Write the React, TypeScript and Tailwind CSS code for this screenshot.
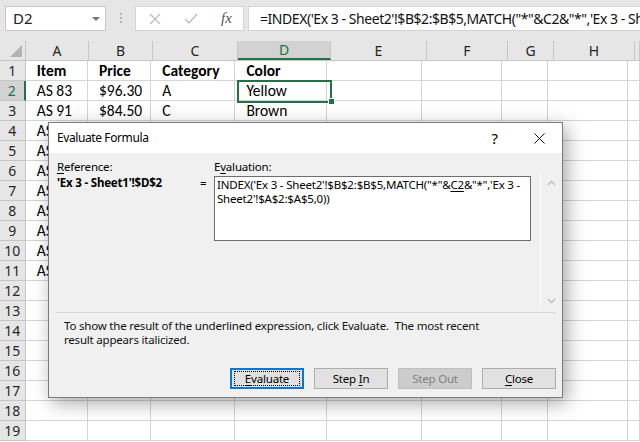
import React from "react";

const colWidths = ["w-[63px]", "w-[64px]", "w-[85px]", "w-[93px]", "w-[96px]", "w-[81px]", "w-[46px]", "w-[81px]", "flex-1"];
const colNames = ["A", "B", "C", "D", "E", "F", "G", "H", ""];

const cells: string[][] = [
  ["Item", "Price", "Category", "Color"],
  ["AS 83", "$96.30", "A", "Yellow"],
  ["AS 91", "$84.50", "C", "Brown"],
  ["AS 12", "$11.20", "B", "Green"],
  ["AS 35", "$47.80", "A", "Red"],
  ["AS 47", "$62.10", "D", "Blue"],
  ["AS 58", "$23.40", "B", "White"],
  ["AS 66", "$71.90", "C", "Black"],
  ["AS 72", "$39.60", "A", "Grey"],
  ["AS 78", "$55.00", "D", "Pink"],
  ["AS 99", "$18.70", "B", "Orange"],
];

const cellFont = { fontFamily: "Carlito, Lato, 'Liberation Sans', sans-serif" };
const uiFont = { fontFamily: "'Segoe UI', 'Noto Sans', 'Open Sans', sans-serif" };

function FormulaBar() {
  return (
    <div className="flex h-[41px] items-start bg-[#e6e6e6] pt-[6px]" style={uiFont}>
      <div className="ml-[5px] flex h-[25px] w-[101px] items-center justify-between border border-[#c6c6c6] bg-white pl-[7px] pr-[5px] text-[15px] text-[#222]">
        <span>D2</span>
        <span className="mt-[1px] h-0 w-0 border-x-[4px] border-t-[4px] border-x-transparent border-t-[#777]" />
      </div>
      <div className="ml-[14px] mt-[7px] flex flex-col gap-[2px]">
        <span className="h-[2px] w-[2px] bg-[#b4b4b4]" />
        <span className="h-[2px] w-[2px] bg-[#b4b4b4]" />
        <span className="h-[2px] w-[2px] bg-[#b4b4b4]" />
      </div>
      <div className="ml-[13px] flex h-[25px] w-[109px] items-center border border-[#d4d4d4] bg-white">
        <svg width="12" height="12" viewBox="0 0 12 12" className="ml-[13px]">
          <path d="M1 1 L11 11 M11 1 L1 11" stroke="#bdbdbd" strokeWidth="1.3" fill="none" />
        </svg>
        <svg width="14" height="12" viewBox="0 0 14 12" className="ml-[23px]">
          <path d="M1 6 L5 10 L13 1" stroke="#bdbdbd" strokeWidth="1.5" fill="none" />
        </svg>
        <span className="ml-[23px] text-[15px] italic text-[#555]" style={{ fontFamily: "'Liberation Serif', serif" }}>
          fx
        </span>
      </div>
      <div className="ml-[4px] flex h-[25px] flex-1 items-center overflow-hidden whitespace-nowrap border border-r-0 border-[#d4d4d4] bg-white pl-[11px] text-[14px] tracking-[-0.45px] text-[#111]">
        =INDEX('Ex 3 - Sheet2'!$B$2:$B$5,MATCH("*"&amp;C2&amp;"*",'Ex 3 - Sheet2'!$A$2:$A$5,0))
      </div>
    </div>
  );
}

function HeaderRow() {
  return (
    <div className="flex h-[20px] border-b border-[#c6c6c6] bg-[#e6e6e6] text-[14px] text-[#262626]" style={uiFont}>
      <div className="relative w-[26px] border-r border-[#c6c6c6]">
        <span className="absolute bottom-[3px] right-[3px] h-0 w-0 border-b-[12px] border-l-[12px] border-b-[#b4b4b4] border-l-transparent" />
      </div>
      {colNames.map((name, i) => (
        <div
          key={i}
          className={`${colWidths[i]} flex items-center justify-center border-r border-[#c6c6c6] ${
            name === "D" ? "border-b-2 border-b-[#217346] bg-[#d2d2d2] text-[#217346]" : ""
          }`}
        >
          {name}
        </div>
      ))}
    </div>
  );
}

function GridRow({ index, values }: { index: number; values: string[] }) {
  const active = index === 2;
  return (
    <div className="flex h-[20px]">
      <div
        className={`flex w-[26px] items-center justify-center border-b border-r border-[#c6c6c6] text-[14px] ${
          active ? "border-r-2 border-r-[#217346] bg-[#d2d2d2] text-[#217346]" : "bg-[#e6e6e6] text-[#262626]"
        }`}
        style={uiFont}
      >
        {index}
      </div>
      {colWidths.map((w, i) => (
        <div
          key={i}
          className={`${w} flex items-center overflow-hidden whitespace-nowrap border-b border-r border-[#d4d4d4] pl-[11px] text-[15.5px] text-black ${
            index === 1 ? "font-bold" : ""
          }`}
          style={cellFont}
        >
          {values[i] ?? ""}
        </div>
      ))}
    </div>
  );
}

function DialogButton({
  label,
  mnemonic,
  rest,
  primary,
  disabled,
}: {
  label: string;
  mnemonic: string;
  rest: string;
  primary?: boolean;
  disabled?: boolean;
}) {
  return (
    <div
      className={`flex h-[21px] w-[74px] items-center justify-center ${
        primary
          ? "border-2 border-[#0078d7] bg-[#e1e1e1] text-black"
          : disabled
          ? "border border-[#bfbfbf] bg-[#cccccc] text-[#838383]"
          : "border border-[#adadad] bg-[#e1e1e1] text-black"
      }`}
    >
      <div className={primary ? "flex h-[15px] w-[66px] items-center justify-center border border-dotted border-black" : ""}>
        {label}
        <span className={disabled ? "" : "underline underline-offset-2"}>{mnemonic}</span>
        {rest}
      </div>
    </div>
  );
}

function EvaluateDialog() {
  return (
    <div
      className="absolute left-[48px] top-[122px] flex h-[276px] w-[515px] flex-col border border-[#7a7a7a] bg-[#f0f0f0] text-[11.5px] tracking-[-0.2px] text-black shadow-[4px_5px_18px_rgba(0,0,0,0.35)]"
      style={uiFont}
    >
      <div className="flex h-[30px] items-center bg-white pl-[8px] text-[12px] tracking-[-0.4px]">
        <span>Evaluate Formula</span>
        <span className="ml-auto w-[45px] text-center text-[15px]">?</span>
        <span className="flex w-[45px] items-center justify-center">
          <svg width="11" height="11" viewBox="0 0 11 11">
            <path d="M0.5 0.5 L10.5 10.5 M10.5 0.5 L0.5 10.5" stroke="#111" strokeWidth="1" fill="none" />
          </svg>
        </span>
      </div>

      <div className="flex h-[156px]">
        <div className="w-[151px] pl-[8px] pt-[7px] leading-[14px]">
          <div>
            <span className="underline underline-offset-2">R</span>eference:
          </div>
          <div className="mt-[2px] whitespace-nowrap font-bold">'Ex 3 - Sheet1'!$D$2</div>
        </div>
        <div className="w-[14px] pt-[23px] leading-[14px]">=</div>
        <div className="w-[317px] pt-[7px] leading-[14px]">
          <div>
            E<span className="underline underline-offset-2">v</span>aluation:
          </div>
          <div className="mt-[2px] h-[65px] border border-[#6e6e6e] bg-white px-[2px] pt-[1px] leading-[14px]">
            <div className="whitespace-nowrap">
              INDEX('Ex 3 - Sheet2'!$B$2:$B$5,MATCH("*"&amp;<span className="underline underline-offset-2">C2</span>&amp;"*",'Ex 3 -
            </div>
            <div className="whitespace-nowrap">Sheet2'!$A$2:$A$5,0))</div>
          </div>
        </div>
        <div className="ml-[9px] mt-[22px] flex h-[134px] w-[22px] flex-col items-center justify-between border-l border-white py-[5px]">
          <svg width="9" height="6" viewBox="0 0 9 6">
            <path d="M1 5 L4.5 1.5 L8 5" stroke="#c2c2c2" strokeWidth="1.6" fill="none" />
          </svg>
          <svg width="9" height="6" viewBox="0 0 9 6">
            <path d="M1 1 L4.5 4.5 L8 1" stroke="#c2c2c2" strokeWidth="1.6" fill="none" />
          </svg>
        </div>
      </div>

      <div className="mx-[6px] mt-[3px] border-t border-[#d9d9d9]" />

      <div className="mt-[6px] pl-[15px] leading-[14px] text-[#111]">
        <div className="whitespace-nowrap">
          To show the result of the underlined expression, click Evaluate.&nbsp; The most recent
        </div>
        <div>result appears italicized.</div>
      </div>

      <div className="mt-[21px] flex justify-end gap-[10px] pr-[6px]">
        <DialogButton label="" mnemonic="E" rest="valuate" primary />
        <DialogButton label="Step " mnemonic="I" rest="n" />
        <DialogButton label="Step Out" mnemonic="" rest="" disabled />
        <DialogButton label="" mnemonic="C" rest="lose" />
      </div>
    </div>
  );
}

export default function App() {
  const rows = Array.from({ length: 19 }, (_, i) => cells[i] ?? []);
  return (
    <div className="relative h-[442px] w-[640px] overflow-hidden bg-white">
      <FormulaBar />
      <HeaderRow />
      {rows.map((values, i) => (
        <GridRow key={i} index={i + 1} values={values} />
      ))}
      <span className="pointer-events-none absolute left-[237px] top-[80px] h-[23px] w-[95px] border-2 border-[#217346]" />
      <span className="absolute left-[328px] top-[98px] h-[7px] w-[7px] border border-white bg-[#217346]" />
      <EvaluateDialog />
    </div>
  );
}
